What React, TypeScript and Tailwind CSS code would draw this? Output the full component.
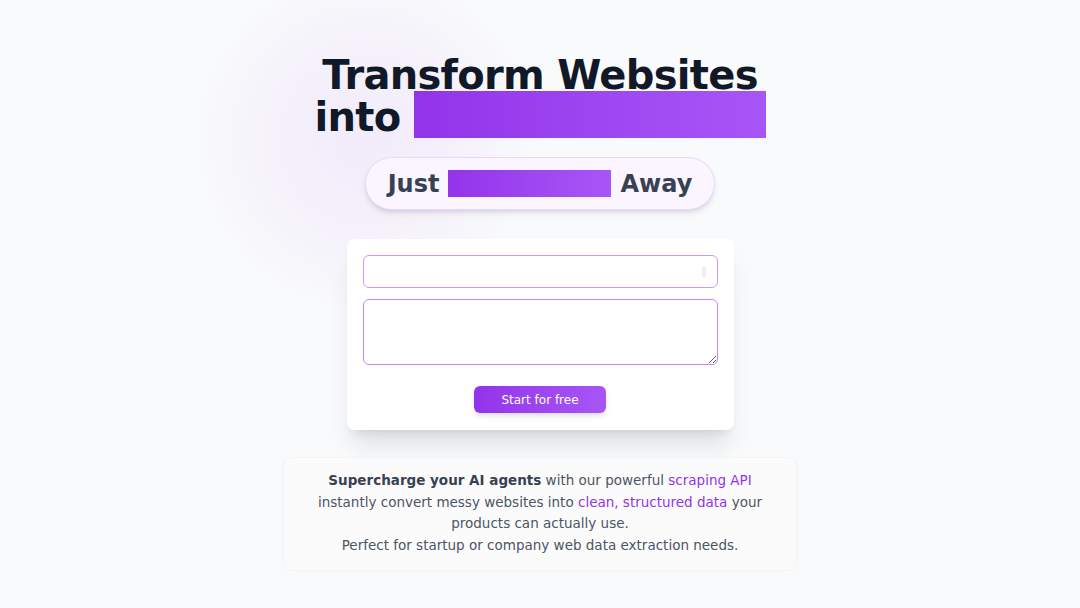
import React from "react";

export default function App() {
  return (
    <div
      className="relative min-h-[608px] w-full overflow-hidden bg-[#f9fafb]"
      style={{ fontFamily: '"DejaVu Sans", sans-serif' }}
    >
      <div
        className="pointer-events-none absolute left-[195px] top-[-30px] h-[340px] w-[340px] rounded-full"
        style={{
          background:
            "radial-gradient(circle at center, rgba(168,85,247,0.09) 0%, rgba(168,85,247,0.05) 40%, rgba(168,85,247,0) 70%)",
        }}
      />
      <div className="relative flex flex-col items-center pt-[54px]">
        <h1 className="flex flex-col items-center text-[40px] font-bold tracking-[-0.7px] text-[#111827]">
          <div className="leading-[42px]">Transform Websites</div>
          <div className="-mt-[5px] flex items-end gap-[13px]">
            <span className="leading-[42px]">into</span>
            <span className="block h-[47px] w-[352px] bg-gradient-to-r from-[#9333ea] to-[#a855f7]" />
          </div>
        </h1>

        <div className="mt-[19px] flex h-[53px] w-[350px] items-center justify-center gap-[9px] rounded-full border border-[#e9d5ff] bg-[#faf5ff] text-[24px] font-bold text-[#374151] shadow-md">
          <span>Just</span>
          <span className="block h-[27px] w-[163px] bg-gradient-to-r from-[#9333ea] to-[#a855f7]" />
          <span>Away</span>
        </div>

        <div className="mt-[29px] flex w-[387px] flex-col rounded-lg bg-white px-4 pb-[17px] pt-4 shadow-xl">
          <div className="relative">
            <input
              className="block h-[33px] w-full rounded-md border border-[#c89bfa] bg-white outline-none"
              type="text"
            />
            <span className="absolute right-[12px] top-[12px] block h-[10px] w-[4px] bg-[#f3eafe]" />
          </div>
          <textarea className="mt-[11px] block h-[66px] w-full rounded-md border border-[#c089fa] bg-white outline-none" />
          <div className="mt-[21px] flex justify-center">
            <button className="h-[27px] w-[132px] rounded-md bg-gradient-to-r from-[#9333ea] to-[#a855f7] text-[12px] text-white shadow-md">
              Start for free
            </button>
          </div>
        </div>

        <div className="mt-[27px] w-[514px] rounded-lg border border-[#f3f4f6] bg-white/30 px-4 pb-[13px] pt-[12px] text-center text-[13.5px] leading-[21.7px] text-[#4b5563]">
          <span className="font-bold text-[#374151]">Supercharge your AI agents</span> with our powerful{" "}
          <span className="text-[#9333ea]">scraping API</span>
          <br />
          instantly convert messy websites into <span className="text-[#9333ea]">clean, structured data</span> your
          <br />
          products can actually use.
          <br />
          Perfect for startup or company web data extraction needs.
        </div>
      </div>
    </div>
  );
}
